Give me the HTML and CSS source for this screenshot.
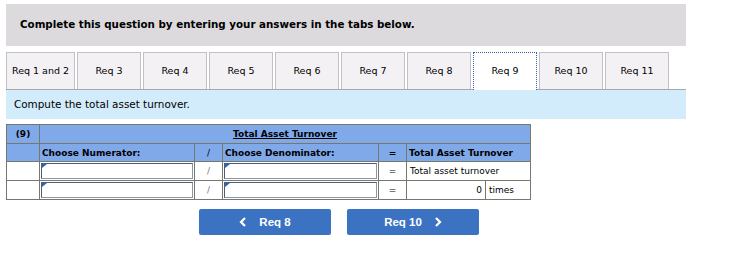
FILE: index.html
```html
<!DOCTYPE html>
<html lang="en">
<head>
    <meta charset="UTF-8">
    <title>Req 9 - Total Asset Turnover</title>
    <link rel="stylesheet" href="styles.css">
</head>
<body>
    <div class="page">
        <div class="banner">Complete this question by entering your answers in the tabs below.</div>

        <div class="tabs">
            <div class="tab first">Req 1 and 2</div>
            <div class="tab">Req 3</div>
            <div class="tab">Req 4</div>
            <div class="tab">Req 5</div>
            <div class="tab">Req 6</div>
            <div class="tab">Req 7</div>
            <div class="tab">Req 8</div>
            <div class="tab active">Req 9</div>
            <div class="tab">Req 10</div>
            <div class="tab">Req 11</div>
        </div>

        <div class="prompt">Compute the total asset turnover.</div>

        <table class="ratio">
            <tr class="head top">
                <td class="num-col">(9)</td>
                <td colspan="6" class="title"><span>Total Asset Turnover</span></td>
            </tr>
            <tr class="head">
                <td class="num-col"></td>
                <td class="label">Choose Numerator:</td>
                <td class="op thin">/</td>
                <td class="label">Choose Denominator:</td>
                <td class="op">=</td>
                <td colspan="2" class="label">Total Asset Turnover</td>
            </tr>
            <tr>
                <td></td>
                <td class="pick"><div class="select"></div></td>
                <td class="op light">/</td>
                <td class="pick"><div class="select"></div></td>
                <td class="op">=</td>
                <td colspan="2" class="text">Total asset turnover</td>
            </tr>
            <tr>
                <td></td>
                <td class="pick"><div class="select"></div></td>
                <td class="op light">/</td>
                <td class="pick"><div class="select"></div></td>
                <td class="op">=</td>
                <td class="value">0</td>
                <td class="unit">times</td>
            </tr>
        </table>

        <div class="nav">
            <button class="nav-btn">
                <svg class="chev" width="8" height="10" viewBox="0 0 8 10"><polyline points="6,1 2,5 6,9" fill="none" stroke="#fff" stroke-width="2.2"/></svg>
                Req 8
            </button>
            <button class="nav-btn">
                Req 10
                <svg class="chev" width="8" height="10" viewBox="0 0 8 10"><polyline points="2,1 6,5 2,9" fill="none" stroke="#fff" stroke-width="2.2"/></svg>
            </button>
        </div>
    </div>
</body>
</html>
```

FILE: styles.css
```css
body {
    margin: 0;
    font-family: "DejaVu Sans", Verdana, sans-serif;
    color: #000;
    background: #fff;
}
.page {
    padding: 4px 0 0 6px;
    width: 680px;
}
.banner {
    height: 42px;
    line-height: 40px;
    padding-left: 14px;
    background: #dcdadd;
    font-size: 10.3px;
    font-weight: bold;
}
.tabs {
    display: flex;
    gap: 2px;
    margin-top: 6px;
    border-bottom: 1px solid #a8a8a8;
    height: 37px;
}
.tab {
    box-sizing: border-box;
    width: 64px;
    height: 37px;
    line-height: 36px;
    text-align: center;
    font-size: 9.5px;
    background: #f4f1f5;
    border: 1px solid #c3bfc6;
    border-bottom: none;
}
.tab.first {
    width: 69px;
}
.tab.active {
    background: #fff;
    border: 1px dotted #3a5fa8;
    border-bottom: none;
    height: 38px;
    margin-bottom: -1px;
}
.prompt {
    height: 29px;
    line-height: 29px;
    padding-left: 8px;
    background: #d3ecfb;
    font-size: 10.4px;
}
.ratio {
    margin-top: 5px;
    border-collapse: collapse;
    font-size: 9px;
}
.ratio td {
    border: 1px solid #76786e;
    height: 18px;
    padding: 0 3px;
    box-sizing: border-box;
}
.ratio .top td {
    height: 19px;
}
.ratio .head td {
    background: #80a9ea;
    font-weight: bold;
}
.ratio .head td.thin {
    font-weight: normal;
}
.num-col {
    width: 33px;
    text-align: center;
}
.title {
    text-align: center;
}
.title span {
    text-decoration: underline;
}
.ratio td.label {
    padding-left: 2px;
}
.ratio td:nth-child(2) {
    width: 155px;
}
.ratio td:nth-child(4) {
    width: 156px;
}
.op {
    width: 28px;
    text-align: center;
}
.op.light {
    color: #777;
}
.ratio td.pick {
    padding: 1px;
}
.select {
    position: relative;
    height: 16px;
    background: #fff;
    border: 1px solid #8a96a8;
    border-top-color: #4d5d74;
    border-left-color: #4d5d74;
    box-sizing: border-box;
}
.select::before {
    content: "";
    position: absolute;
    left: 0;
    top: 0;
    border-left: 5px solid #2f62c0;
    border-bottom: 4px solid transparent;
}
.text {
    padding-left: 3px;
}
.value {
    width: 79px;
    text-align: right;
}
.unit {
    width: 45px;
}
.nav {
    display: flex;
    gap: 16px;
    margin-top: 9px;
    padding-left: 193px;
}
.nav-btn {
    display: flex;
    align-items: center;
    justify-content: center;
    gap: 12px;
    width: 132px;
    height: 26px;
    border: none;
    border-radius: 2px;
    background: #3b73c2;
    color: #fff;
    font-family: "Liberation Sans", Arial, sans-serif;
    font-size: 11.5px;
    font-weight: bold;
}
```
